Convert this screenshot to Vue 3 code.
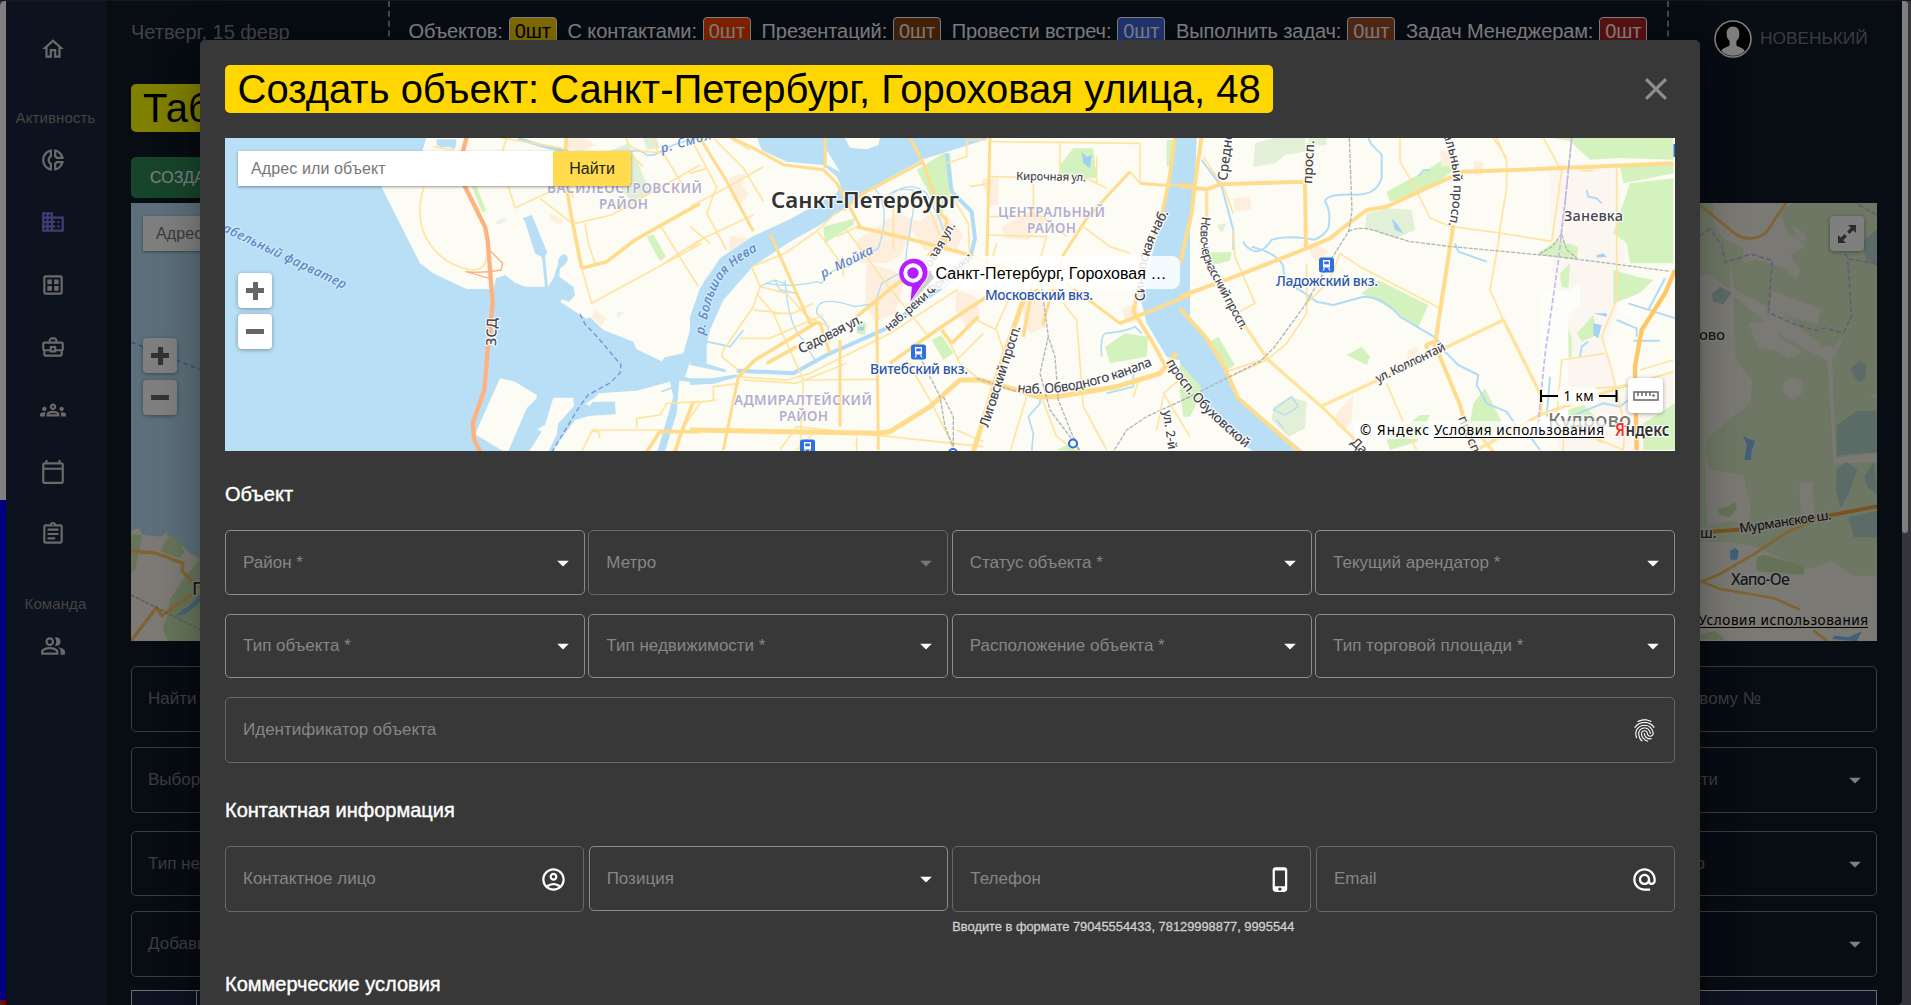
<script setup>
import { h } from 'vue'

const icons = {
  home: 'm12 5.69 5 4.5V18h-2v-6H9v6H7v-7.81l5-4.5M12 3 2 12h3v8h6v-6h2v6h6v-8h3L12 3z',
  donut: 'M14.82 11h7.13c-.47-4.72-4.23-8.48-8.95-8.95v7.13c.85.31 1.51.97 1.82 1.82zM15 4.58C17 5.4 18.6 7 19.42 9h-3.43c-.28-.37-.62-.71-.99-.99V4.58zM2 12c0 5.19 3.95 9.45 9 9.95v-7.13C9.84 14.4 9 13.3 9 12s.84-2.4 2-2.82V2.05c-5.05.5-9 4.76-9 9.95zm7-7.42v3.44c-1.23.92-2 2.39-2 3.98 0 1.59.77 3.06 2 3.99v3.44C6.04 18.24 4 15.35 4 12c0-3.35 2.04-6.24 5-7.42zm4 10.24v7.13c4.72-.47 8.48-4.23 8.95-8.95h-7.13c-.31.85-.97 1.51-1.82 1.82zm2 1.17c.37-.28.71-.61.99-.99h3.43C18.6 17 17 18.6 15 19.42v-3.43z',
  business: 'M12 7V3H2v18h20V7H12zM6 19H4v-2h2v2zm0-4H4v-2h2v2zm0-4H4V9h2v2zm0-4H4V5h2v2zm4 12H8v-2h2v2zm0-4H8v-2h2v2zm0-4H8V9h2v2zm0-4H8V5h2v2zm10 12h-8v-2h2v-2h-2v-2h2v-2h-2V9h8v10zm-2-8h-2v2h2v-2zm0 4h-2v2h2v-2z',
  grid: 'M19 3H5c-1.1 0-2 .9-2 2v14c0 1.1.9 2 2 2h14c1.1 0 2-.9 2-2V5c0-1.1-.9-2-2-2zm0 16H5V5h14v14zM6.8 7h4.2v4.2H6.8zM13 7h4.2v4.2H13zM6.8 13h4.2v4.2H6.8zM13 13h4.2v4.2H13z',
  work: 'M20 7h-4V5l-2-2h-4L8 5v2H4c-1.1 0-2 .9-2 2v5c0 .75.4 1.38 1 1.73V19c0 1.11.89 2 2 2h14c1.11 0 2-.89 2-2v-3.28c.59-.35 1-.99 1-1.72V9c0-1.1-.9-2-2-2zM10 5h4v2h-4V5zM4 9h16v5h-5v-3H9v3H4V9zm9 6h-2v-2h2v2zm6 4H5v-3h4v1h6v-1h4v3z',
  groups: 'M4 13c1.1 0 2-.9 2-2s-.9-2-2-2-2 .9-2 2 .9 2 2 2zm1.13 1.1C4.76 14.04 4.39 14 4 14c-.99 0-1.93.21-2.78.58C.48 14.9 0 15.62 0 16.43V18h4.5v-1.61c0-.83.23-1.61.63-2.29zM20 13c1.1 0 2-.9 2-2s-.9-2-2-2-2 .9-2 2 .9 2 2 2zm4 3.43c0-.81-.48-1.53-1.22-1.85-.85-.37-1.79-.58-2.78-.58-.39 0-.76.04-1.13.1.4.68.63 1.46.63 2.29V18H24v-1.57zM16.24 13.65c-1.17-.52-2.61-.9-4.24-.9-1.63 0-3.07.39-4.24.9C6.68 14.13 6 15.21 6 16.39V18h12v-1.61c0-1.18-.68-2.26-1.76-2.74zM8.07 16c.09-.23.13-.39.91-.69.97-.38 1.99-.56 3.02-.56s2.05.18 3.02.56c.77.3.81.46.91.69H8.07zM12 8c.55 0 1 .45 1 1s-.45 1-1 1-1-.45-1-1 .45-1 1-1m0-2c-1.66 0-3 1.34-3 3s1.34 3 3 3 3-1.34 3-3-1.34-3-3-3z',
  calendar: 'M20 3h-1V1h-2v2H7V1H5v2H4c-1.1 0-2 .9-2 2v16c0 1.1.9 2 2 2h16c1.1 0 2-.9 2-2V5c0-1.1-.9-2-2-2zm0 18H4V10h16v11zm0-13H4V5h16v3z',
  assignment: 'M7 15h7v2H7zm0-4h10v2H7zm0-4h10v2H7zm12-4h-4.18C14.4 1.84 13.3 1 12 1c-1.3 0-2.4.84-2.82 2H5c-1.1 0-2 .9-2 2v14c0 1.1.9 2 2 2h14c1.1 0 2-.9 2-2V5c0-1.1-.9-2-2-2zm-7-.25c.41 0 .75.34.75.75s-.34.75-.75.75-.75-.34-.75-.75.34-.75.75-.75zM19 19H5V5h14v14z',
  people: 'M16.67 13.13C18.04 14.06 19 15.32 19 17v3h4v-3c0-2.18-3.57-3.47-6.33-3.87zM15 12c2.21 0 4-1.79 4-4s-1.79-4-4-4c-.47 0-.91.1-1.33.24C14.5 5.27 15 6.58 15 8s-.5 2.73-1.33 3.76c.42.14.86.24 1.33.24zM9 12c2.21 0 4-1.79 4-4s-1.79-4-4-4-4 1.79-4 4 1.79 4 4 4zm0-6c1.1 0 2 .9 2 2s-.9 2-2 2-2-.9-2-2 .9-2 2-2zm0 7c-2.67 0-8 1.34-8 4v3h16v-3c0-2.66-5.33-4-8-4zm6 5H3v-.99C3.2 16.29 6.3 15 9 15s5.8 1.29 6 2v1z',
  fingerprint: 'M17.81 4.47c-.08 0-.16-.02-.23-.06C15.66 3.42 14 3 12.01 3c-1.98 0-3.86.47-5.57 1.41-.24.13-.54.04-.68-.2-.13-.24-.04-.55.2-.68C7.82 2.52 9.86 2 12.01 2c2.13 0 3.99.47 6.03 1.52.25.13.34.43.21.67-.09.18-.26.28-.44.28zM3.5 9.72c-.1 0-.2-.03-.29-.09-.23-.16-.28-.47-.12-.7.99-1.4 2.25-2.5 3.75-3.27C9.98 4.04 14 4.03 17.15 5.65c1.5.77 2.76 1.86 3.75 3.25.16.22.11.54-.12.7-.23.16-.54.11-.7-.12-.9-1.26-2.04-2.25-3.39-2.94-2.87-1.47-6.54-1.47-9.4.01-1.36.7-2.5 1.7-3.4 2.96-.08.14-.23.21-.39.21zm6.25 12.07c-.13 0-.26-.05-.35-.15-.87-.87-1.34-1.43-2.01-2.64-.69-1.23-1.05-2.73-1.05-4.34 0-2.97 2.54-5.39 5.66-5.39s5.66 2.42 5.66 5.39c0 .28-.22.5-.5.5s-.5-.22-.5-.5c0-2.42-2.09-4.39-4.66-4.39-2.57 0-4.66 1.97-4.66 4.39 0 1.44.32 2.77.93 3.85.64 1.15 1.08 1.64 1.85 2.42.19.2.19.51 0 .71-.11.1-.24.15-.37.15zm7.17-1.85c-1.19 0-2.24-.3-3.1-.89-1.49-1.01-2.38-2.65-2.38-4.39 0-.28.22-.5.5-.5s.5.22.5.5c0 1.41.72 2.74 1.94 3.56.71.48 1.54.71 2.54.71.24 0 .64-.03 1.04-.1.27-.05.53.13.58.41.05.27-.13.53-.41.58-.57.11-1.07.12-1.21.12zM14.91 22c-.04 0-.09-.01-.13-.02-1.59-.44-2.63-1.03-3.72-2.1-1.4-1.39-2.17-3.24-2.17-5.22 0-1.62 1.38-2.94 3.08-2.94 1.7 0 3.08 1.32 3.08 2.94 0 1.07.93 1.94 2.08 1.94s2.08-.87 2.08-1.94c0-3.77-3.25-6.83-7.25-6.83-2.84 0-5.44 1.58-6.61 4.03-.39.81-.59 1.76-.59 2.8 0 .78.07 2.01.67 3.61.1.26-.03.55-.29.64-.26.1-.55-.04-.64-.29-.49-1.31-.73-2.61-.73-3.96 0-1.2.23-2.29.68-3.24 1.33-2.79 4.28-4.6 7.51-4.6 4.55 0 8.25 3.51 8.25 7.83 0 1.62-1.38 2.94-3.08 2.94s-3.08-1.32-3.08-2.94c0-1.07-.93-1.94-2.08-1.94s-2.08.87-2.08 1.94c0 1.71.66 3.31 1.87 4.51.95.94 1.86 1.46 3.27 1.85.27.07.42.35.35.61-.05.23-.26.38-.47.38z',
  account: 'M12 2C6.48 2 2 6.48 2 12s4.48 10 10 10 10-4.48 10-10S17.52 2 12 2zM7.35 18.5C8.66 17.56 10.26 17 12 17s3.34.56 4.65 1.5c-1.31.94-2.91 1.5-4.65 1.5s-3.34-.56-4.65-1.5zm10.79-1.38C16.45 15.8 14.32 15 12 15s-4.45.8-6.14 2.12C4.7 15.73 4 13.95 4 12c0-4.42 3.58-8 8-8s8 3.58 8 8c0 1.95-.7 3.73-1.86 5.12zM12 6c-1.93 0-3.5 1.57-3.5 3.5S10.07 13 12 13s3.5-1.57 3.5-3.5S13.93 6 12 6zm0 5c-.83 0-1.5-.67-1.5-1.5S11.17 8 12 8s1.5.67 1.5 1.5S12.83 11 12 11z',
  phone: 'M15.5 1h-8C6.12 1 5 2.12 5 3.5v17C5 21.88 6.12 23 7.5 23h8c1.38 0 2.5-1.12 2.5-2.5v-17C18 2.12 16.88 1 15.5 1zm-4 21c-.83 0-1.5-.67-1.5-1.5s.67-1.5 1.5-1.5 1.5.67 1.5 1.5-.67 1.5-1.5 1.5zm4.5-4H7V4h9v14z',
  at: 'M12 1.95c-5.52 0-10 4.48-10 10s4.48 10 10 10h5v-2h-5c-4.34 0-8-3.66-8-8s3.66-8 8-8 8 3.66 8 8v1.43c0 .79-.71 1.57-1.5 1.57s-1.5-.78-1.5-1.57v-1.43c0-2.76-2.24-5-5-5s-5 2.24-5 5 2.24 5 5 5c1.38 0 2.64-.56 3.54-1.47.65.89 1.77 1.47 2.96 1.47 1.97 0 3.5-1.6 3.5-3.57v-1.43c0-5.52-4.48-10-10-10zm0 13c-1.66 0-3-1.34-3-3s1.34-3 3-3 3 1.34 3 3-1.34 3-3 3z',
  close: 'M19 6.41 17.59 5 12 10.59 6.41 5 5 6.41 10.59 12 5 17.59 6.41 19 12 13.41 17.59 19 19 17.59 13.41 12z',
  drop: 'm7 10 5 5 5-5z'
}

const Icon = (props) =>
  h('svg', { viewBox: '0 0 24 24', fill: 'currentColor', class: 'icon' }, [h('path', { d: icons[props.name] })])
Icon.props = ['name']

const nav = ['donut', 'business', 'grid', 'work', 'groups', 'calendar', 'assignment']

const stats = [
  { label: 'Объектов:', tone: 'gold' },
  { label: 'С контактами:', tone: 'orange' },
  { label: 'Презентаций:', tone: 'saddle' },
  { label: 'Провести встреч:', tone: 'royal' },
  { label: 'Выполнить задач:', tone: 'sienna' },
  { label: 'Задач Менеджерам:', tone: 'fire' }
]

const filters = [
  { left: 'Найти по адресу', right: 'Найти по кадастровому №', cls: 'f1' },
  { left: 'Выбор района', right: 'Тип недвижимости', cls: 'f2', select: true },
  { left: 'Тип недвижимости', right: 'Помещение, метро', cls: 'f3', select: true },
  { left: 'Добавил', right: '', cls: 'f4', select: true }
]

const rowOne = [
  { label: 'Район *' },
  { label: 'Метро', disabled: true },
  { label: 'Статус объекта *' },
  { label: 'Текущий арендатор *' }
]
const rowTwo = [
  { label: 'Тип объекта *' },
  { label: 'Тип недвижимости *' },
  { label: 'Расположение объекта *' },
  { label: 'Тип торговой площади *' }
]
</script>

<template>
  <div class="app">
    <div class="page">
      <div class="edge"><i class="edge-white"></i><i class="edge-blue"></i><i class="edge-red"></i></div>

      <aside class="sidebar">
        <Icon name="home" class="nav-home" />
        <span class="caption">Активность</span>
        <nav class="nav">
          <Icon v-for="n in nav" :key="n" :name="n" :class="{ active: n === 'business' }" />
        </nav>
        <span class="caption team">Команда</span>
        <Icon name="people" class="nav-people" />
      </aside>

      <main class="main">
        <header class="header">
          <div class="date">Четверг, 15 февр</div>
          <div class="stats">
            <div v-for="s in stats" :key="s.label" class="stat">
              <span>{{ s.label }}</span><b class="badge" :class="s.tone">0шт</b>
            </div>
          </div>
          <div class="user">
            <svg class="avatar" viewBox="0 0 38 38">
              <circle cx="19" cy="19" r="18" fill="#000" stroke="#fff" stroke-width="1.6" />
              <path d="M19 6.5c-4 0-6.400 3-6.400 7.200 0 3 1 5.600 3 7.300v4c0 1.800-7 2.500-8.400 6 3 3.200 7 4.800 11.800 4.800s8.800-1.600 11.800-4.800c-1.400-3.500-8.400-4.200-8.400-6v-4c2-1.700 3-4.300 3-7.300 0-4.200-2.400-7.200-6.400-7.200z" fill="#fff" />
            </svg>
            <span>НОВЕНЬКИЙ</span>
          </div>
        </header>

        <h1 class="page-title"><span>Таблица объектов</span></h1>
        <button class="create">СОЗДАТЬ ОБЪЕКТ</button>

        <div class="bg-map">
          <svg class="map-svg" viewBox="131 204 1746 438">
            <rect x="131" y="204" width="300" height="438" fill="#b8dff5" />
            <g transform="translate(0 330) scale(.33333)">
              <path d="M393 607l22-10 13 20 52 6 14-8 8-8-2 12 13 1 27 22 20 23 40 25 200 30v260H393z" fill="#fbf5ea" />
              <path d="M393 617h34l-10 50-12 55-12 10zM480 665l30-48 28 22 16 30-14 18-30-8zM600 690l-50 60-40 60-10 60-12 30 16 36h300V690z" fill="#cde8b4" />
              <path d="M600 795l-28 32-30 20-15 14 30-6 43-35z" fill="#8cc3ee" />
              <path d="M393 666l70 6 40 13 46 18-2 24 28 28 40 35M575 798l-90 62-15-25-76 100" class="road orange" stroke-width="10" />
              <path d="M393 798l210 105" class="rail" />
              <path d="M393 39q110 45 210 84" class="ferry" />
            </g>
            <g transform="translate(1560 180) scale(.33333)">
              <rect x="0" y="72" width="960" height="1320" fill="#dcefc8" />
              <path d="M420 72l40 0 0 60 30 45 60 30 0 45 40-10 80 25 40 35 10-30-30-45 50-25-60-45-20-60 40-25h150l-40-20H420zM420 290l20-8 80 55 8 205 48 60-5 70-130 105-5 50 15 45 100 18 20 95-6 50-60-10-65 15zM420 1090h90l70 10 110 50 60 20 65-25 65 45 70 0v225H420zM520 330l160 85 110 90 25-8 12 340 125-15v28l-130 5-20-310-120-65-150-120zM510 255l15 75 15 30-30-8zM565 432l55-5 40 28-5 20 75 45-45 18-30-22-60-10zM635 335l150 55-15 45-140-37zM670 610l30-15 30 10-5 40-30 18-25-22zM718 915l40-8 5 105-40-5zM700 145l30 15 12 20-30 5zM800 530l55-65-25 60-20 20zM930 655l21-15v20z" fill="#f6f2e8" />
              <path d="M455 345l25-22 35 18-25 35-30-8zM870 570l30-25 20 10-5 45-20 12zM830 740l60-45 60 0v125l-120 10zM830 870l30-22 32 25-25 70-25 45-15-55zM912 890l30-40 10 95-30-20zM865 1015l86-20v80l-70 0zM905 190l46-40v110l-30-10z" fill="#b6d9cf" />
              <path d="M550 770l15 10 20 5-10 30-2 28h-20l8-45zM510 1115l15-8 12 10-6 25h-20z" fill="#82bff0" />
              <path d="M470 990l30-5 25-15 5 20-20 25-30-8zM590 1135l20-8 125 35-5 25-140-10zM420 1365l45-8 30 25h-75z" fill="#cbe5b0" />
              <path d="M420 78l110 90q50 25 90-10l60-90M420 1210l60-25 110-65 90-60 70-30M430 1210l50 20 160 27 80 35M760 1355l40 30" class="road orange" stroke-width="8" />
              <path d="M420 1060l120-8 200-30 211-40" class="road highway" stroke-width="11" />
              <path d="M420 170l30-20 35 50 12 50 75-25 65 20-12 155 75 35 70 20 25-8 55 15 25-50-12-172-20-50M865 240l90 15M895 78l60 32" class="border" />
              <path d="M815 1380l10-10 40 5 40-18-15 30z" fill="#82bff0" />
            </g>
            <g class="label" fill="#333" font-size="16">
              <text x="192" y="596" font-size="18">Петергоф</text>
              <text x="1690" y="341" font-size="15" textLength="35">дово</text>
              <text x="1731" y="586" textLength="59">Хапо-Ое</text>
              <text transform="translate(1740 534) rotate(-8.500)" textLength="93" font-size="13.500">Мурманское ш.</text>
              <text x="1700" y="539" font-size="14">ш.</text>
            </g>
            <g class="legal"><text x="1698.500" y="626" textLength="169.500">Условия использования</text><path d="M1698 628.500h170" stroke="#000" /></g>
          </svg>
          <div class="map-ui bg-ui">
            <div class="search"><span class="ph">Адрес или объект</span><span class="find">Найти</span></div>
            <div class="zooms"><i class="plus"></i><i></i></div>
            <div class="expand">
              <svg viewBox="0 0 18 18"><path d="M10 0h8v8l-2.800-2.800-3.700 3.700-2.400-2.400 3.700-3.700zM0 10l2.800 2.800 3.700-3.700 2.400 2.400-3.700 3.700L8 18H0z" fill="#555" /></svg>
            </div>
          </div>
        </div>

        <div class="filters">
          <div v-for="f in filters" :key="f.cls" class="filter" :class="f.cls">
            <span>{{ f.left }}</span>
            <span class="right">{{ f.right }}</span>
            <Icon v-if="f.select" name="drop" class="arrow" />
          </div>
        </div>
        <div class="table"><div></div><div></div></div>
      </main>
      <div class="scroll"><i></i></div>
    </div>

    <div class="backdrop">
      <section class="dialog">
        <div class="dialog-head">
          <h2>Создать объект: Санкт-Петербург, Гороховая улица, 48</h2>
          <Icon name="close" class="close" />
        </div>

        <div class="map">
          <svg class="map-svg" viewBox="225 138 1450 313">
            <rect x="225" y="138" width="1450" height="313" fill="#fcfcf5" />

            <!-- areas and water, western part -->
            <g transform="translate(220 130) scale(.33333)">
              <path d="M1155 70l70-30 30 60 35 90-55 25-50-60z" fill="#e0efd8" />
              <path d="M1270 24l40 0 10 30-40 5z" fill="#e0efd8" />
              <path d="M1030 24h65l30 20-40 20-50-10zM990 250l40 20-10 15-30-15zM1125 540l35 25-15 22-30-25z" fill="#fdeede" />
              <path d="M755 170h15l28 70-10 10zM1280 320l20-8 38 68-18 14z" fill="#d4f2bd" />
              <path d="M825 275l25-12 15 8-30 14zM1190 548l25-5-20 20z" fill="#eef0ec" />
              <path d="M0 20H620L605 70 560 168H483L600 400 640 430 720 468 740 477H820L828 445 855 435 885 458 915 470H975L966 382 945 370 915 275 908 265 935 255 942 270 982 368 975 378 984 470 1000 445 1015 400Q1012 385 1028 373 1048 375 1042 393 1035 407 1020 415L1018 440 1060 470 1065 495 1048 515 1025 508 1022 517 1100 567 1110 562 1150 600 1240 635 1250 658 1325 694 1335 682 1390 670 1410 600 1440 480 1460 440V700L1410 695 1395 740 1450 760 1378 752 1370 850 1335 965H1312L1360 800 1350 755 1250 782 1135 790 1128 800 1095 822 1110 828 1118 815 1185 815 1187 853 1110 857 1065 870 995 965H0Z" fill="#b8dff5" />
              <path d="M840 745l45 10 65 40v10l-30 30-55 128-20-2-80-48zM1000 803l60 0 2 25-47 52-5 35-25 50h-58l38-60-15-7 25-13z" fill="#fcfcf5" />
              <path d="M650 28h60l-5 30-20-8-20 2-15-6z" fill="#b8dff5" />
              <path d="M895 24q60 25 150 40" class="stream" stroke-width="10" />
              <path d="M1230 65q30-10 50 10 20 5 40-10l40-20 80-25" class="stream" stroke-width="5" />
              <path d="M1325 785l50-20" class="stream" stroke-width="5" />
            </g>

            <!-- areas and water, centre -->
            <g transform="translate(690 130) scale(.33333)">
              <path d="M120 140l45-8-8 35 20 25-30 35-25-30zM500 330l50-30 70-50 70 25 20-20 60 0 50 60-20 50-100-5-30-60-40 80-40 20-80 0zM530 400l80 20 35 30-30 100-60 25-30-50zM800 480l60 20 10 60-40 30-35-50zM935 290l90-50 50 30-60 60-70-5zM1000 500l60 0 10 90-50 20-20-40zM875 145h50v80h-30zM1295 540l45-25 10 60-40 5zM120 315l80 15-10 30-75 5z" fill="#fdeede" />
              <path d="M680 120l80-50 20 0 10 120-40 70-30-65zM1110 105l40-50 60 0 10 90-110-5zM400 290l95-25-5 20-85 55zM1430 30l25 0-10 80-15 0zM725 630l30-15 35 55-30 20zM1245 650l60-40 70 10-5 60-110 20zM500 570l30 10-5 35-25-5zM1100 960l30-15 40 20z" fill="#d4f2bd" />
              <path d="M200 20L215 60 290 95 400 105 440 140 452 165 440 190 300 268 190 318 90 385 30 475 0 560V690H40L60 600 100 510 190 408 300 335 390 285 480 225 540 175 700 88 890 28V20ZM1455 20H1500V700L1430 680 1370 580 1350 500 1380 400 1430 200ZM0 685l110 35-5 7L0 705zM0 745l65 0 75-12 2 8-70 20-72 4z" fill="#b8dff5" />
              <path d="M465 24h105l-5 22-35 12-50-5zM410 60l40 65-40-20z" fill="#fcfcf5" />
              <path d="M210 468l45-18 30 12M255 450l15 30 50 10M285 450q10 140 55 180l40 70M555 175q50 60 10 180-60 30-90 55-50 0-80 50l-15-5q-80 20-150 5M610 190q50-40 100 0l40 80 20 60M590 220q0-50 80-40l0 60-20 120-5 60-70 40-20 60-60 10q-120-40-115 20 50 40 30 80" class="stream" stroke-width="4" />
              <path d="M770 70l15 115 60 60 10 80-15 60-60 70-100 70-90 70-180 80-100 55-170-8" class="stream" stroke-width="12" />
              <path d="M1235 680q-5-60 10-70 60-5 90-20l20 20M1330 730l0 40-80 20M1050 790l0 30-35 40 15 50-5 55M50 635l70 15 40-50" class="stream" stroke-width="5" />
              <path d="M1175 65l15 15 15-5-5 40-20-15zM505 590h18l-3 12-18-2z" fill="#9fd0f4" />
            </g>

            <!-- areas and water, eastern part -->
            <g transform="translate(1180 130) scale(.33333)">
              <path d="M1105 100h210l20 300-20 120-60 180-30 0-5 250-90 10V680l20-120-30-120zM1150 680l130-10 40 130 160-80v240H1130z" fill="#fbf7f0" />
              <path d="M0 20H50L45 160 20 300 0 400zM0 535L70 610 130 700 175 800 370 965H220L130 900 0 730z" fill="#b8dff5" />
              <path d="M620 185l110-60 60-35 30 30-60 50-130 45zM545 490l50-40 60 30 90 45-30 65-110-70zM1120 24h360v65l-160-5-90 5-60-55zM1350 160l130-15v255l-130 0-10-60-40-30zM1320 110l160-10v30l-150 30zM1130 330l65 20-5 40-120-15zM1300 420l70 20 50 10-40 40-80 30zM1140 430l30-30-5 75-20-5zM1130 580l25-15 20 60 0 60-40-20zM1190 610l50-55 10 60-45 20zM500 675l45-25 25 30-10 25zM90 635l25-15 50 85-25 15zM880 820l35-45 50 100-30 50-70-10zM620 930l100-75 30 0-40 80-80 25zM0 700l70 80-40 80-20 0-10-70zM80 367l75 0-5 25-60 15zM1160 840l50-15 60 60-90 20zM1390 880l95-60v140h-95z" fill="#d4f2bd" />
              <path d="M225 40l70-20h80v45l-60 10-30 25-65 10zM385 24h55v22h-50zM560 250l70-15 65 5 10 60-60 25-90-30zM280 830l50-30 50 15-5 80-50 25-50-50zM110 285l30-5-15 30z" fill="#e2f0d8" />
              <path d="M780 60l40 10 5 35-40 5zM160 205l50-5 5 40-50 5zM385 340l60 20-20 40-30-20zM470 850l50-55-5 80-20 25-30-15zM685 660l30-10-10 55-25-5zM880 95l30 0-5 40-20 0z" fill="#fdeede" />
              <path d="M1085 480l80 0 0 380-80 20zM1140 500l60-40 0 70-50 30zM1310 520l70-30v80l-60-20z" fill="#fdfdf9" />
              <path d="M565 24l10 20 30 30 0 70q-15 50-75 50-90-5-95 20 20 30 10 80-10 20-40 35-80-15-130 0-20 35-50 35-30-10-35-30M65 90l60 80 35 130 0 60M215 350q80 20 95 60 0 50 50 70l50 35 50 10 90-25q60 0 110 60l110 65 25 40 40 40 60 30-5 30 30 55 60 25 40 60M715 140l15-20 20 0M1220 180l5 20 25 5 15 15M825 340l10 25 85 30M1345 520l140 45M1405 540l50-95M1370 620l0-25-60-25M1360 632l80 0M1200 680l5-30 20-15M1110 740l-10 120M1170 860l100-40 50 10 60-50M1050 920l30 40" class="stream" stroke-width="6" />
              <path d="M635 265l15 15 20 30-25-10zM1240 580l25 5-10 40-15-10zM1250 375l20-5 10 10-30 3zM1240 550h40v10z" fill="#a5d3f3" />
              <path d="M280 840l55-40 20 30-40 25zM290 870l20 25" class="stream" stroke-width="4" />
            </g>

            <!-- street grid, western part -->
            <g transform="translate(220 130) scale(.33333)">
              <path d="M612 170q-25 80 0 140 40 90 140 110 50 0 45-40M640 50l60 10M860 24l-20 60 45 150 75-35 90-40 80-60 0-25M960 205l90 70M1065 280l110-25 265-150M1095 280l10 60 20 60M1085 415l30 105 330-180M1320 285l115 185M1220 24q0 30 50 40l60 5 60 100M845 24l180 30M1220 60l50 50M1060 205l-20-60M1085 965l30-60 20 0 5 20M1115 900h215M1250 895v-30l70-10 20-35 100-5M1385 900l55-80M1315 70l-15-46M1330 400l110-70" class="road light" stroke-width="5" />
              <path d="M1040 24l-10 90 25 150 30 150M1085 415l75-20 85-65 195-110M1440 905h-120l-40 60M1365 965l20-60 35-90" class="road" stroke-width="11" />
              <path d="M808 360l40 40-5 20q-50 10-105 5l70 20" class="road motorway" stroke-width="4" />
              <path d="M740 20l-10 40 0 100 65 130 8 40 15 190-15 140-10 120-35 100 5 50 20 40" class="road motorway" stroke-width="13" />
            </g>

            <!-- street grid, centre -->
            <g transform="translate(690 130) scale(.33333)">
              <path d="M0 230l115-60 105-60M0 355l40-30 150-70M0 130l50-15M120 24l60 35M70 24l90 90 60 100M60 340L0 290M0 20l80 150-30 80 60 110M185 410l25 60-20 60-90 130-5 20 50 40M380 300l80 110 0 30M440 320l60-30M185 410l100-40 100-70 60-60M210 470l80 20 60 70 70 30M200 490l50 60 90 200-10 210M250 550l60 0 60-30M470 300l110 150 120 150 20 25M190 540l90 10M150 625l90 0 160-70M140 740l150 10 70-20 200-100 40-20 200-130 40-80-5-120-60-100M160 750l160 10 150-60M610 190l0 170M720 240l40 100M840 170l60-10M770 100l60-20 0-50 60 0M900 140l290 5 60 30M900 35l450 5 0 120-30-35M900 260l160 0 70 60M890 315l180 5-50 170M1030 160v100M1110 40v100M1220 80v80M1180 290l80 60 60 20M920 340l-20 70M850 420l150-30M760 600l50 100 60 50M800 690l80-80M860 570l60 30 30 90M915 600l40-90M1120 520l40 50 20 260 70 130M1050 790l50 130 60 45M1010 800l-50 165M0 820l80-10M70 810v-40l80-10M650 690l70 120 60 120 10 35M345 750l220-2M270 960l50-70 560 60M380 900l-60 60M500 920v45M800 900l80 35M1490 730l-70 60 80 130M1420 800l-20 100M1330 800l20-60" class="road light" stroke-width="5" />
              <path d="M30 24l80 130 80 150M125 24l65 30 90 50 120 15 40 40 70 130M405 24v90M240 310l120 270 30 0 30 90M660 24l40 75 50 150 20 20-5 80M700 95l-180 95-60 50M560 640l0-110M900 24l-10 380M1320 125l-130 140-70 110-60 200 0 10M1350 160l60 5 90 0M1130 460l160 120 70-30M560 510l5 450M450 630l0 260M145 740l-45 220" class="road" stroke-width="9" />
              <path d="M500 290l150 35 170 45 220 80M500 560l110-90 80-60 80-100M145 740l50-50 100-60 80-50M230 700l90-50M600 700l140-100 150-100M785 640l80-80M755 600l30 40M1060 450l-40 60-20 110M1290 580l210-85M1455 24l-15 110-20 100-60 180-30 130 50 80 50 90" class="road" stroke-width="11" />
              <path d="M0 900l560 10 40-5 120-75 90-80 60 0 110 30 60 20 60 0 180-30 130-40 50-60M1000 510l-70 200-80 255" class="road" stroke-width="15" />
              <path d="M1055 470l20 150 20 60 10 130 60 150M1075 620l-25 110 30 110 90 120M690 680l60 120 15 90 25 60M760 800l30 60 0 90M860 745l120 40M1500 800l-130 60-60 40-40 65" class="rail" />
            </g>

            <!-- street grid, eastern part -->
            <g transform="translate(1180 130) scale(.33333)">
              <path d="M660 24l0 70 40 70 50 100 60 25 150 20 155 25 30-210-60-110M960 310l-30 170 40 90M950 24l30 70 0 80-25 150M1310 110l0 400-45 110 30 100 40 170-5 70-140-60M480 370l60 40 240 125M380 400l0 150-60 90-60 50-110 50M140 725l120-40M170 550l55-30-60-140-5-80M70 80l60 90 30 80M480 370l-30 80-70 70M620 760l60 140 30 60M1130 870l15-180 130-20M1130 780l200-10 150-45M1160 880l110 60M1380 720l100-30M1200 120q20 5 40 0M940 24l40 60M1150 965v-60M0 500l40-20" class="road light" stroke-width="5" />
              <path d="M80 180l0 110M190 580l75 110 160 140 90 90 40 45M425 828l195-90 350-168 115 230-5 60M860 870l80 95M890 960l190-105 260-90" class="road light" stroke-width="10" />
              <path d="M0 400l35-150 10-90 20-140M0 168l80 10 40-15 250-8M0 535l80 90 50 80 45 100 190 165M0 500l190-70 190-75 70-30 50-40 60-45 60-10 140-65 90-40 150-5 240-10 240-10M385 40l-10 130 3 190M820 285l-40 260-15 100 25 60 50 120 40 140M765 635q-40 10-20 20" class="road" stroke-width="12" />
              <path d="M1485 420l-30 70-70 110-20 110 5 250" class="road orange" stroke-width="13" />
              <path d="M508 24l8 220-10 60-50 80-80 140-95 130-40 40-120 60-120 60M506 304q40-20 100 5l80 25 120 15 320 30 345 45M1175 24l-20 200-12 90-25 35-45 25M1145 314l15 45 30 25" class="rail" />
              <path d="M1175 24l-20 190-20 180-40 280-25 250" class="border" />
            </g>

            <path d="M1673.500 144v13h2v-13z" fill="#2f6fe0" />

            <g class="ferry-line"><path d="M580 314l5 10 15 16 21 25-1 8-10 10-22 12-10 14-26 43" class="ferry" /></g>

            <!-- labels -->
            <g class="label" fill="#484850" font-size="14">
              <text x="547" y="193" class="area" textLength="155">ВАСИЛЕОСТРОВСКИЙ</text>
              <text x="599" y="209" class="area" textLength="49">РАЙОН</text>
              <text x="734" y="405" class="area" textLength="138">АДМИРАЛТЕЙСКИЙ</text>
              <text x="779" y="420.500" class="area" textLength="49">РАЙОН</text>
              <text x="998" y="217" class="area" textLength="107">ЦЕНТРАЛЬНЫЙ</text>
              <text x="1027" y="232.500" class="area" textLength="49">РАЙОН</text>
              <text x="771" y="208" class="city" textLength="188" lengthAdjust="spacingAndGlyphs">Санкт-Петербург</text>
              <text transform="translate(222 231) rotate(25.500)" class="river" textLength="136">абельный фарватер</text>
              <text transform="translate(662 153) rotate(-16)" class="river">р. Смоленка</text>
              <path id="neva" d="M704 335Q712 285 730 270 745 256 764 248" fill="none" />
              <text class="river"><textPath href="#neva" textLength="106">р. Большая Нева</textPath></text>
              <text transform="translate(823 278) rotate(-26)" class="river" textLength="58">р. Мойка</text>
              <text x="1016" y="180" font-size="11.500" textLength="70" transform="rotate(1 1016 180)">Кирочная ул.</text>
              <text transform="translate(801 354) rotate(-27)" textLength="70">Садовая ул.</text>
              <text transform="translate(889 332) rotate(-41)" font-size="12.500" textLength="112">наб. реки Фонтанки</text>
              <text transform="translate(931 268) rotate(-60)" font-size="12.500">овая ул.</text>
              <text transform="translate(988 428) rotate(-72)" textLength="106" font-size="13.500">Лиговский просп.</text>
              <path id="obv" d="M1017 392Q1070 400 1156 364" fill="none" stroke="none" />
              <text font-size="13.500"><textPath href="#obv" textLength="140">наб. Обводного канала</textPath></text>
              <path id="sin" d="M1145 301Q1141 255 1171 210" fill="none" />
              <text font-size="13.500"><textPath href="#sin" textLength="93">Синопская наб.</textPath></text>
              <path id="obu" d="M1166 362Q1185 400 1260 460" fill="none" />
              <text font-size="13.500"><textPath href="#obu" textLength="118">просп. Обуховской</textPath></text>
              <text transform="translate(1163 411) rotate(82)" font-size="12.500">ул. 2-й Луч</text>
              <text transform="translate(496 346) rotate(-88)" font-size="14" textLength="28">ЗСД</text>
              <text transform="translate(1227 181) rotate(-83)" font-size="13.500">Среднеохтинский</text>
              <text transform="translate(1312 184) rotate(-87)" font-size="13.500">просп. Эн</text>
              <path id="nov" d="M1202 216Q1196 255 1214 280 1228 308 1243 333" fill="none" />
              <text font-size="12.500"><textPath href="#nov" textLength="124">Новочеркасский просп.</textPath></text>
              <path id="ind" d="M1436 121Q1463 170 1448 227" fill="none" />
              <text font-size="13"><textPath href="#ind" textLength="108">риальный просп.</textPath></text>
              <text transform="translate(1378 383) rotate(-26)" font-size="12.500" textLength="76">ул. Коллонтай</text>
              <text transform="translate(1350 443) rotate(44)" font-size="13">Дальнев</text>
              <text transform="translate(1458 418) rotate(68)" font-size="13">просп.</text>
              <text x="1564" y="221" font-size="14.500" textLength="59">Заневка</text>
              <text x="1548" y="427" font-size="20" fill="#777" textLength="83">Кудрово</text>
              <g fill="#2d56a8" font-size="14">
                <text x="870" y="373.500" textLength="98">Витебский вкз.</text>
                <text x="985" y="300" textLength="108">Московский вкз.</text>
                <text x="1276" y="285.500" textLength="102">Ладожский вкз.</text>
              </g>
            </g>
            <g v-for="p in [[911, 344.500], [800, 439.500], [1319, 257.500]]" :key="p[0]" :transform="`translate(${p[0]} ${p[1]})`">
              <rect width="15" height="15" rx="2.500" fill="#2f6fe0" />
              <path d="M4 2.500h7v7.500H4z" fill="#fff" />
              <path d="M5.200 4h4.600v2.800H5.200z" fill="#2f6fe0" />
              <path d="M5.500 10.500L4 13M9.500 10.500L11 13" fill="none" stroke="#fff" stroke-width="1.200" />
            </g>
            <g fill="#fff" stroke="#2f6fe0" stroke-width="2.200"><circle cx="1073" cy="443.500" r="4" /><circle cx="953" cy="453" r="4" /></g>

            <!-- selected address -->
            <rect x="914" y="256" width="266" height="33" rx="8" fill="#fff" opacity=".85" />
            <path d="M912 302l22-24-4-8-12 10z" fill="#777" opacity=".35" />
            <path d="M910 303l1.500-17a14 14 0 1 1 12-3.500z" fill="#b51eff" stroke="#fff" stroke-width=".8" />
            <circle cx="913" cy="273" r="13.800" fill="#b51eff" />
            <circle cx="913" cy="273" r="7.700" fill="#b51eff" stroke="#fff" stroke-width="4" />
            <text x="935.500" y="278.500" class="pin-text" textLength="231">Санкт-Петербург, Гороховая …</text>

            <!-- scale and attribution -->
            <rect x="1558" y="387" width="40" height="18" rx="5" fill="#fff" opacity=".8" />
            <path d="M1541 390v12M1541 396h17M1599 396h17M1616.500 390v12" stroke="#000" stroke-width="2" />
            <rect x="1354" y="421" width="252" height="18" rx="5" fill="#fff" opacity=".7" />
            <g class="legal">
              <text x="1563.500" y="401" textLength="30">1 км</text>
              <text x="1360" y="435" textLength="69">© Яндекс</text>
              <text x="1434" y="435" textLength="170">Условия использования</text>
              <path d="M1434 437.500h170" stroke="#000" />
            </g>
            <g class="logo"><text x="1615" y="436" class="ya" textLength="10" lengthAdjust="spacingAndGlyphs">Я</text><text x="1625.500" y="436" textLength="44" lengthAdjust="spacingAndGlyphs">ндекс</text></g>
          </svg>

          <div class="map-ui">
            <div class="search"><span class="ph">Адрес или объект</span><span class="find">Найти</span></div>
            <div class="zooms"><i class="plus"></i><i></i></div>
            <div class="ruler">
              <svg viewBox="0 0 26 10"><path d="M1 1h24v8H1zM5 1v4M9 1v4M13 1v4M17 1v4" fill="none" stroke="#666" stroke-width="1.500" /><circle cx="20.500" cy="4.500" r="1.300" fill="#666" /></svg>
            </div>
          </div>
        </div>

        <h3 class="h-object">Объект</h3>
        <div class="row selects r1">
          <div v-for="f in rowOne" :key="f.label" class="field" :class="{ disabled: f.disabled }">
            <span>{{ f.label }}</span><Icon name="drop" class="arrow" />
          </div>
        </div>
        <div class="row selects r2">
          <div v-for="f in rowTwo" :key="f.label" class="field">
            <span>{{ f.label }}</span><Icon name="drop" class="arrow" />
          </div>
        </div>
        <div class="row single r3">
          <div class="field plain"><span>Идентификатор объекта</span><Icon name="fingerprint" class="adorn" /></div>
        </div>

        <h3 class="h-contact">Контактная информация</h3>
        <div class="row r4">
          <div class="field plain"><span>Контактное лицо</span><Icon name="account" class="adorn" /></div>
          <div class="field pos"><span>Позиция</span><Icon name="drop" class="arrow" /></div>
          <div class="cell">
            <div class="field plain"><span>Телефон</span><Icon name="phone" class="adorn" /></div>
            <p class="helper">Вводите в формате 79045554433, 78129998877, 9995544</p>
          </div>
          <div class="field plain"><span>Email</span><Icon name="at" class="adorn" /></div>
        </div>

        <h3 class="h-terms">Коммерческие условия</h3>
      </section>
    </div>
  </div>
</template>

<style>
html, body { overflow: hidden; background: #35353b; }
</style>

<style scoped>
* { box-sizing: border-box; }
.app { position: relative; width: 1911px; height: 1005px; overflow: hidden; font-family: "Liberation Sans", Arial, sans-serif; color: #fff; }
h1, h2, h3, p { margin: 0; font-weight: 400; }
.icon { display: block; flex: none; }

.page { display: flex; width: 1911px; height: 1005px; background: #6a6a76; border-top: 1px solid #2b303c; }
.edge { width: 6px; display: flex; flex-direction: column; overflow: hidden; border-radius: 5px 0 0 5px; }
.edge i { display: block; }
.edge-white { height: 499px; background: #fff; }
.edge-blue { height: 500px; background: #00f; }
.edge-red { height: 5px; background: #f00; }

.sidebar { width: 100px; background: #1b273c; display: flex; flex-direction: column; align-items: center; padding-right: 6px; }
.sidebar .icon { width: 26px; height: 26px; color: #d4d4d4; }
.nav-home { margin-top: 35px; }
.caption { font-size: 15px; line-height: 18px; color: #888; margin: 47px -5px 0 0; white-space: nowrap; letter-spacing: .1px; }
.nav { display: flex; flex-direction: column; gap: 36.400px; margin-top: 20px; }
.sidebar .icon.active { color: #7c7ce8; }
.caption.team { margin-top: 48px; }
.nav-people { margin-top: 20px; }

.main { width: 1796px; background: #111827; padding: 0 25px; display: flex; flex-direction: column; border-radius: 0 0 5px 0; }
.header { display: flex; height: 76px; }
.date { width: 259px; border-right: 2px dashed #8b8d93; font-size: 20px; line-height: 24px; padding-top: 19px; color: #85868a; white-space: nowrap; }
.stats { width: 1279px; border-right: 2px dashed #8b8d93; display: flex; align-items: flex-start; gap: 10.700px; padding: 16px 0 0 18.500px; font-size: 20px; line-height: 29px; white-space: nowrap; }
.stat { display: flex; gap: 6px; letter-spacing: -.1px; }
.badge { width: 48px; height: 30px; font-weight: 400; border: 1px solid #fff; border-radius: 4px; text-align: center; line-height: 27px; letter-spacing: 0; }
.gold { background: #ffd700; color: #000; }
.orange { background: #ff4500; }
.saddle { background: #8b4513; }
.royal { background: #4169e1; }
.sienna { background: #a0522d; }
.fire { background: #b22222; }
.user { display: flex; align-items: center; gap: 8px; padding-left: 45px; font-size: 17.300px; color: #76787c; }
.avatar { width: 38px; height: 38px; flex: none; }

.page-title { margin-top: 8px; height: 48px; }
.page-title span { display: inline-block; background: #ff0; color: #000; font-size: 40px; line-height: 48px; padding: 0 12px; border-radius: 5px; }
.create { margin-top: 25px; width: 220px; height: 41px; flex: none; border: 0; border-radius: 5px; background: #2e8b57; color: #fff; font: 16px "Liberation Sans", Arial, sans-serif; text-align: left; padding: 0 19px; }

.bg-map { position: relative; width: 1746px; height: 438px; margin-top: 5px; flex: none; }
.map { position: relative; width: 1450px; height: 313px; margin-top: 25px; flex: none; }
.map-svg { display: block; width: 100%; height: 100%; overflow: hidden; }
.map-ui { position: absolute; inset: 0; font-size: 16px; }
.search { position: absolute; left: 13px; top: 13px; display: flex; height: 35px; line-height: 35px; box-shadow: 0 1px 3px rgba(0, 0, 0, .4); border-radius: 0 4px 4px 0; }
.ph { width: 315px; background: #fff; color: #777; padding-left: 13px; letter-spacing: .12px; }
.find { width: 78px; background: #ffdb4d; color: #222; text-align: center; border-radius: 0 4px 4px 0; }
.zooms { position: absolute; left: 13px; top: 135px; display: flex; flex-direction: column; gap: 6px; }
.zooms i, .expand, .ruler { display: flex; width: 34px; height: 35px; align-items: center; justify-content: center; background: #fff; border-radius: 4px; box-shadow: 0 1px 4px rgba(0, 0, 0, .35); }
.zooms i { background: linear-gradient(#666, #666) center / 18px 5px no-repeat #fff; }
.zooms i.plus { background: linear-gradient(#666, #666) center / 18px 5px no-repeat, linear-gradient(#666, #666) center / 5px 18px no-repeat #fff; }
.bg-ui .search { left: 12px; }
.bg-ui .zooms { left: 12px; gap: 7px; }
.expand { position: absolute; right: 13px; top: 13px; }
.expand svg { width: 18px; height: 18px; }
.ruler { position: absolute; width: 35px; right: 12px; bottom: 38px; }
.ruler svg { width: 26px; height: 10px; }

.road { fill: none; stroke: #ffdc8c; stroke-linejoin: round; }
.road.light { stroke: #ffe4a0; }
.road.orange { stroke: #ffc764; }
.road.motorway { stroke: #ffb27f; }
.road.highway { stroke: #f0a640; }
.stream { fill: none; stroke: #b1dcf5; stroke-linejoin: round; }
.rail { fill: none; stroke: #b3b3b3; stroke-width: 4; stroke-dasharray: 12 4; }
.border { fill: none; stroke: #c4b8ee; stroke-width: 5; stroke-dasharray: 16 7; }
.ferry { fill: none; stroke: #6c96d8; stroke-width: 4; stroke-dasharray: 14 10; }
.ferry-line .ferry { stroke-width: 1.300; stroke-dasharray: 5 3; }
.label text { font-family: "Noto Sans", sans-serif; font-weight: 500; paint-order: stroke; stroke: rgba(255, 255, 255, .85); stroke-width: 2.500px; stroke-linejoin: round; }
.label .area { fill: #b3aecd; font-size: 13.500px; font-weight: 600; stroke-width: 1.500px; }
.label .city { font-size: 22px; font-weight: 600; fill: #333; }
.label .river { fill: #5b85c9; font-style: italic; font-weight: 500; font-size: 13px; stroke: rgba(255, 255, 255, .3); letter-spacing: 1px; }
.legal text { font: 13.500px "Noto Sans", sans-serif; fill: #000; }
.logo text { font: 600 17px "Noto Sans", sans-serif; fill: #333; paint-order: stroke; stroke: #fff; stroke-width: 2px; }
.logo .ya { fill: #ff2a2a; }
.pin-text { font: 16px "Liberation Sans", Arial, sans-serif; fill: #000; }

.filters { display: flex; flex-direction: column; margin-top: 25px; flex: none; }
.filter { display: flex; align-items: center; height: 66px; border: 1px solid #75767a; border-radius: 5px; padding: 0 16px; font-size: 17px; color: #7a7a7a; margin-bottom: 15px; }
.filter .right { margin-left: auto; white-space: nowrap; }
.filter .arrow { margin-left: 123px; margin-right: -9px; width: 28px; height: 28px; color: #fff; }
.f1 .right { padding-right: 99px; }
.f2 { margin-bottom: 18px; }
.f3 { height: 65px; }
.f3 .arrow { margin-left: 136px; }
.table { display: flex; height: 15px; border: 1px solid #ddd; border-bottom: 0; background: #1b2740; margin-top: -2px; }
.table div:first-child { width: 65px; border-right: 1px solid #ddd; }
.scroll { width: 9px; }
.scroll i { display: block; width: 6px; height: 532px; background: #fff; border-radius: 0 4px 3px 3px; }

.backdrop { position: absolute; inset: 0; background: rgba(0, 0, 0, .5); display: flex; justify-content: center; }
.dialog { width: 1500px; height: 1005px; margin-top: 40px; padding: 25px 25px 0; margin-left: -11px; background: #383838; border-radius: 5px; display: flex; flex-direction: column; box-shadow: 0 11px 15px -7px rgba(0, 0, 0, .2), 0 24px 38px 3px rgba(0, 0, 0, .14), 0 9px 46px 8px rgba(0, 0, 0, .12); }
.dialog-head { display: flex; justify-content: space-between; align-items: center; height: 48px; flex: none; }
.dialog h2 { background: #ffd700; color: #000; font-size: 40px; line-height: 48px; padding: 0 12.500px; border-radius: 5px; white-space: nowrap; }
.close { width: 38px; height: 38px; color: #8e8e8e; }
h3 { font-size: 20px; line-height: 24px; -webkit-text-stroke: .4px #fff; }
.h-object { margin-top: 31px; }
.h-contact { margin-top: 35px; }
.h-terms { margin-top: 60px; }
.row { display: grid; grid-template-columns: repeat(4, minmax(0, 1fr)); flex: none; }
.row.single { grid-template-columns: 1fr; }
.selects { gap: 3.400px; }
.r1 { margin-top: 24px; height: 65px; }
.r2 { margin-top: 19px; height: 64px; }
.r3 { margin-top: 19px; height: 66px; }
.r4 { margin-top: 24px; height: 66px; gap: 4.600px; align-items: start; }
.r4 .field { height: 66px; }
.field { display: flex; align-items: center; justify-content: space-between; border: 1px solid #8b8b8b; border-radius: 5px; padding: 0 7px 0 17px; font-size: 17px; color: #868686; white-space: nowrap; }
.field.disabled, .field.plain { border-color: #686868; }
.field .arrow { width: 28px; height: 28px; color: #fff; }
.field.disabled .arrow { color: #777; }
.field.plain { padding-right: 16px; }
.adorn { width: 27px; height: 27px; color: #fff; }
.r4 .field.pos { height: 65px; }
.helper { font-size: 12.850px; line-height: 16px; margin-top: 7px; color: #d0d0d0; white-space: nowrap; -webkit-text-stroke: .3px #d0d0d0; }
</style>
